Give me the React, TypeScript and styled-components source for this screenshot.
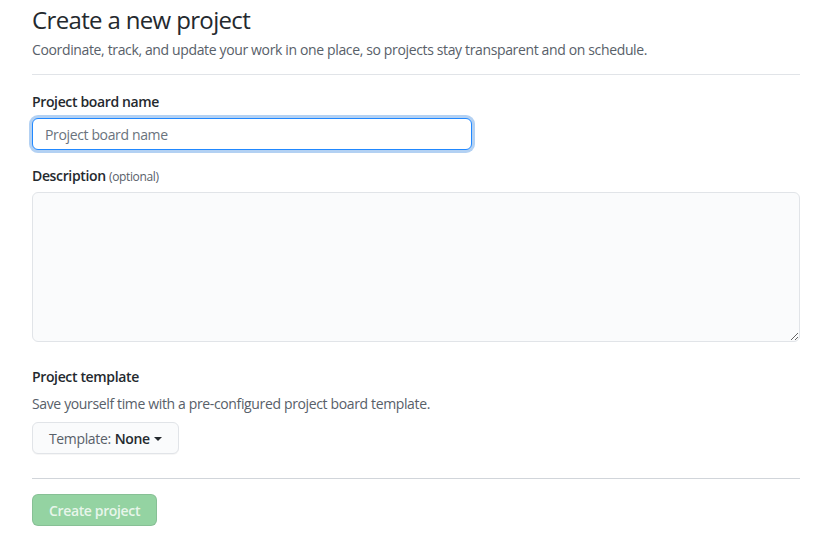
import React from "react";
import styled, { createGlobalStyle } from "styled-components";

const Global = createGlobalStyle`
  html, body { margin: 0; padding: 0; background: #fff; }
  body {
    font-family: "Open Sans", "Noto Sans", "Liberation Sans", sans-serif;
    color: #24292e;
    font-size: 14px;
    line-height: 1.5;
    letter-spacing: -0.36px;
  }
  * { box-sizing: border-box; }
`;

const Page = styled.div`
  width: 768px;
  margin-left: 32px;
  padding-top: 5px;
`;

const Header = styled.div`
  padding-bottom: 14px;
  border-bottom: 1px solid #e1e4e8;
  margin-bottom: 16px;
`;

const Title = styled.h1`
  margin: 0;
  font-size: 24px;
  font-weight: 400;
  line-height: 1.25;
  letter-spacing: -0.65px;
`;

const Subtitle = styled.p`
  margin: 4px 0 0;
  font-size: 14px;
  color: #586069;
`;

const Group = styled.div<{ $top?: number; $bottom?: number }>`
  margin: ${(p) => p.$top ?? 0}px 0 ${(p) => p.$bottom ?? 16}px;
`;

const Label = styled.label`
  display: block;
  font-weight: 600;
  margin-bottom: 6px;
`;

const Optional = styled.span`
  font-size: 12px;
  font-weight: 400;
  color: #586069;
`;

const Input = styled.input`
  width: 440px;
  height: 32px;
  padding: 5px 12px;
  font: inherit;
  font-size: 14px;
  letter-spacing: inherit;
  color: #24292e;
  background: #fff;
  border: 1px solid #2188ff;
  border-radius: 6px;
  box-shadow: 0 0 0 3px rgba(3, 102, 214, 0.3);
  outline: none;
  &::placeholder { color: #6a737d; }
`;

const TextArea = styled.textarea`
  display: block;
  width: 100%;
  height: 150px;
  font: inherit;
  background: #fafbfc;
  border: 1px solid #e1e4e8;
  border-radius: 6px;
  resize: vertical;
  outline: none;
`;

const Note = styled.p`
  margin: 0 0 8px;
  color: #586069;
`;

const SelectButton = styled.button`
  display: inline-flex;
  align-items: center;
  gap: 4px;
  height: 32px;
  padding: 0 16px;
  font: inherit;
  font-size: 14px;
  letter-spacing: inherit;
  color: #586069;
  background: #fafbfc;
  border: 1px solid #e1e4e8;
  border-radius: 6px;
  box-shadow: 0 1px 0 rgba(27, 31, 35, 0.04);
  cursor: pointer;
  b { color: #24292e; font-weight: 600; }
`;

const Caret = styled.span`
  display: inline-block;
  width: 0;
  height: 0;
  border-left: 4px solid transparent;
  border-right: 4px solid transparent;
  border-top: 4px solid #24292e;
  margin-top: 1px;
`;

const Divider = styled.hr`
  border: 0;
  border-top: 1px solid #d1d5da;
  margin: 24px 0 15px;
`;

const Primary = styled.button`
  height: 32px;
  padding: 0 16px;
  font: inherit;
  font-size: 14px;
  font-weight: 600;
  letter-spacing: inherit;
  color: rgba(255, 255, 255, 0.8);
  background: #94d3a2;
  border: 1px solid rgba(27, 31, 35, 0.1);
  border-radius: 6px;
`;

export default function App() {
  return (
    <>
      <Global />
      <Page>
        <Header>
          <Title>Create a new project</Title>
          <Subtitle>
            Coordinate, track, and update your work in one place, so projects stay transparent and on schedule.
          </Subtitle>
        </Header>
        <Group $bottom={15}>
          <Label>Project board name</Label>
          <Input placeholder="Project board name" autoFocus />
        </Group>
        <Group>
          <Label>
            Description <Optional>(optional)</Optional>
          </Label>
          <TextArea />
        </Group>
        <Group $top={24}>
          <Label>Project template</Label>
          <Note>Save yourself time with a pre-configured project board template.</Note>
          <SelectButton>
            Template: <b>None</b>
            <Caret />
          </SelectButton>
        </Group>
        <Divider />
        <Primary disabled>Create project</Primary>
      </Page>
    </>
  );
}
